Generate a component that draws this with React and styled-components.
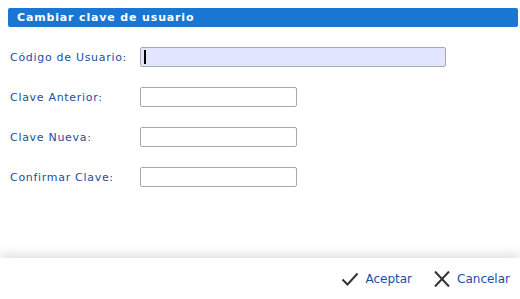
import React from 'react'
import styled, { createGlobalStyle } from 'styled-components'

const GlobalStyle = createGlobalStyle`
    html, body {
        margin: 0;
        padding: 0;
        background: #ffffff;
        font-family: "DejaVu Sans", Verdana, sans-serif;
    }
`

const Page = styled.div`
    width: 520px;
    height: 299px;
    display: flex;
    flex-direction: column;
    overflow: hidden;
`

const Body = styled.div`
    flex: 1;
    padding: 8px 2px 0 8px;
`

const Header = styled.div`
    height: 19px;
    background: #1976d2;
    border-radius: 2px;
    color: #ffffff;
    font-weight: bold;
    font-size: 11px;
    letter-spacing: 0.85px;
    line-height: 19px;
    padding-left: 9px;
`

const Form = styled.div`
    display: grid;
    grid-template-columns: 130px auto;
    row-gap: 20px;
    margin-top: 20px;
    padding-left: 2px;
    align-items: center;
`

const Label = styled.label`
    color: #1c4e9e;
    font-size: 11px;
    letter-spacing: 0.7px;
`

const Input = styled.input`
    box-sizing: border-box;
    width: 157px;
    height: 20px;
    border: 1px solid #a9a9a9;
    border-radius: 2px;
    background: #ffffff;
    margin: 0;
    padding: 0 3px;
    font-family: inherit;
    outline: none;
`

const Caret = styled.span`
    display: inline-block;
    width: 2px;
    height: 14px;
    background: #000;
    margin-top: 2px;
`

const ActiveField = styled.div`
    box-sizing: border-box;
    width: 306px;
    height: 20px;
    border: 1px solid #a9a9a9;
    border-radius: 2px;
    background: #e1e5ff;
    padding-left: 3px;
`

const Footer = styled.div`
    height: 41px;
    display: flex;
    justify-content: flex-end;
    align-items: center;
    gap: 21px;
    padding-right: 10px;
    box-shadow: 0 -4px 10px rgba(0, 0, 0, 0.12);
    background: #fff;
`

const Button = styled.button`
    display: flex;
    align-items: center;
    gap: 6px;
    border: none;
    background: none;
    padding: 0;
    color: #1a4ea6;
    font-family: "DejaVu Sans", Verdana, sans-serif;
    font-size: 12px;
    cursor: pointer;
`

const Check = () => (
    <svg width="18" height="16" viewBox="0 0 18 16">
        <path d="M1.5 8.5 L6.5 13.5 L16.5 2.5" fill="none" stroke="#333" strokeWidth="2" />
    </svg>
)

const Cross = () => (
    <svg width="18" height="16" viewBox="0 0 18 16">
        <path d="M2 0.5 L16 15.5 M16 0.5 L2 15.5" fill="none" stroke="#333" strokeWidth="2" />
    </svg>
)

export default function App() {
    return (
        <Page>
            <GlobalStyle />
            <Body>
                <Header>Cambiar clave de usuario</Header>
                <Form>
                    <Label>Código de Usuario:</Label>
                    <ActiveField><Caret /></ActiveField>
                    <Label>Clave Anterior:</Label>
                    <Input type="password" />
                    <Label>Clave Nueva:</Label>
                    <Input type="password" />
                    <Label>Confirmar Clave:</Label>
                    <Input type="password" />
                </Form>
            </Body>
            <Footer>
                <Button><Check />Aceptar</Button>
                <Button><Cross />Cancelar</Button>
            </Footer>
        </Page>
    )
}
